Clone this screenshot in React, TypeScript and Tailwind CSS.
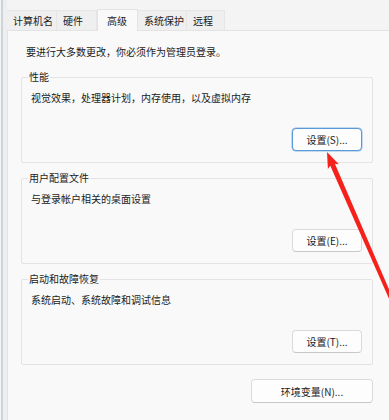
import React from "react";

const font = { fontFamily: '"Microsoft YaHei", "Noto Sans CJK SC", "Noto Sans", sans-serif' };

function Btn({ label, focused, w }: { label: string; focused?: boolean; w: string }) {
  return (
    <div
      className={
        "flex items-center justify-center h-[23px] rounded-[4px] bg-[#fdfdfd] text-[10px] text-[#1b1b1b] " +
        w +
        (focused
          ? " border border-[#5b9ad8] shadow-[0_0_0_0.5px_#8fbbe6]"
          : " border border-[#dadada] border-b-[#c8c8c8]")
      }
    >
      {label}
    </div>
  );
}

function Group({ title, desc, btn, focused }: { title: string; desc: string; btn: string; focused?: boolean }) {
  return (
    <div className="relative h-[86px] border border-[#e3e3e3] rounded-[2px] flex flex-col justify-between pt-[12px] pb-[11px] pl-[9px] pr-[10px]">
      <div className="absolute left-[6px] top-[-9px] px-[1px] bg-[#f9f9f9] text-[10px] leading-[16px] text-[#1b1b1b]">
        {title}
      </div>
      <div className="text-[10px] leading-[16px] text-[#1b1b1b]">{desc}</div>
      <div className="self-end">
        <Btn label={btn} focused={focused} w="w-[70px]" />
      </div>
    </div>
  );
}

export default function App() {
  const tabs = [
    { t: "计算机名", w: "w-[50px]" },
    { t: "硬件", w: "w-[40px]" },
    { t: "高级", w: "w-[41px]", sel: true },
    { t: "系统保护", w: "w-[49px]" },
    { t: "远程", w: "w-[38px]" },
  ];
  return (
    <div className="relative w-[389px] h-[420px] overflow-hidden bg-[#f4f4f4] flex" style={font}>
      <div className="w-[7px] h-full flex">
        <div className="w-[1px]" />
        <div className="w-[2px] h-full bg-[#cdd3da]" />
        <div className="flex-1 bg-[#eeeeee]" />
      </div>
      <div className="flex-1 flex flex-col pt-[10px]">
        <div className="flex h-[20px] items-end">
          {tabs.map((tab) =>
            tab.sel ? (
              <div
                key={tab.t}
                className={
                  "h-[22px] -mb-[1px] relative z-10 bg-[#f9f9f9] border-t border-l border-r border-[#e3e3e3] flex items-start pt-[3px] pl-[9px] text-[10px] text-[#1b1b1b] " +
                  tab.w
                }
              >
                {tab.t}
              </div>
            ) : (
              <div
                key={tab.t}
                className={
                  "h-[20px] bg-[#efefef] border-t border-r border-[#e6e6e6] flex items-center pl-[6px] text-[10px] text-[#1b1b1b] " +
                  tab.w
                }
              >
                {tab.t}
              </div>
            )
          )}
        </div>
        <div className="flex-1 bg-[#f9f9f9] border-t border-l border-[#e3e3e3] pt-[13px] pl-[13px] pr-[16px] flex flex-col">
          <div className="pl-[5px] text-[10px] leading-[16px] text-[#1b1b1b]">要进行大多数更改，你必须作为管理员登录。</div>
          <div className="mt-[17px] flex flex-col gap-[15px]">
            <Group title="性能" desc="视觉效果，处理器计划，内存使用，以及虚拟内存" btn="设置(S)..." focused />
            <Group title="用户配置文件" desc="与登录帐户相关的桌面设置" btn="设置(E)..." />
            <Group title="启动和故障恢复" desc="系统启动、系统故障和调试信息" btn="设置(T)..." />
          </div>
          <div className="mt-[14px] self-end">
            <div className="flex items-center justify-center w-[122px] h-[24px] rounded-[4px] bg-[#fdfdfd] border border-[#dadada] border-b-[#c8c8c8] text-[10px] text-[#1b1b1b]">
              环境变量(N)...
            </div>
          </div>
        </div>
      </div>
      <svg className="absolute inset-0 pointer-events-none" width="389" height="420" viewBox="0 0 389 420">
        <polygon
          fill="#f5221b"
          points="327,152 338.9,164.3 334.9,163.8 396.7,307.2 393.4,308.6 330.3,165.8 327.9,169.1"
        />
      </svg>
    </div>
  );
}
